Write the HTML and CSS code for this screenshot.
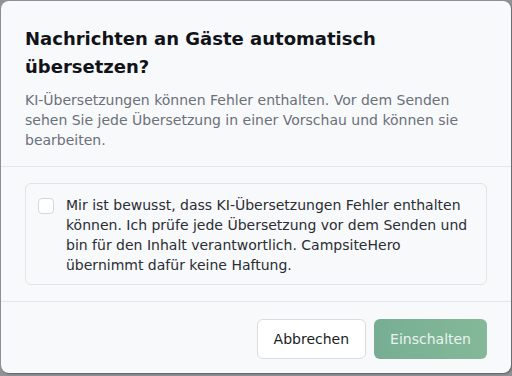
FILE: index.html
```html
<!DOCTYPE html>
<html lang="de">
<head>
<meta charset="utf-8">
<link rel="stylesheet" href="styles.css">
</head>
<body>
<div class="dialog">
  <div class="header">
    <h2 class="title">Nachrichten an Gäste automatisch übersetzen?</h2>
    <p class="desc">KI-Übersetzungen können Fehler enthalten. Vor dem Senden sehen Sie jede Übersetzung in einer Vorschau und können sie bearbeiten.</p>
  </div>
  <div class="body">
    <label class="consent">
      <span class="check"></span>
      <span class="consent-text">Mir ist bewusst, dass KI-Übersetzungen Fehler enthalten können. Ich prüfe jede Übersetzung vor dem Senden und bin für den Inhalt verantwortlich. CampsiteHero übernimmt dafür keine Haftung.</span>
    </label>
  </div>
  <div class="footer">
    <button class="btn btn-secondary">Abbrechen</button>
    <button class="btn btn-primary">Einschalten</button>
  </div>
</div>
</body>
</html>
```

FILE: styles.css
```css
* { box-sizing: border-box; }
html, body { margin: 0; padding: 0; }
body {
  width: 512px;
  height: 376px;
  background: #8f9296;
  font-family: "DejaVu Sans", sans-serif;
  overflow: hidden;
  padding: 1px 0 0 1px;
}
.dialog {
  width: 510px;
  height: 372px;
  background: #f8f9fb;
  border-radius: 8px;
  box-shadow: 1px 1px 2px rgba(0,0,0,0.35);
  display: flex;
  flex-direction: column;
}
.header {
  padding: 24px 24px 16px;
  border-bottom: 1px solid #e3e6ea;
}
.title {
  margin: 0;
  font-size: 18px;
  font-weight: bold;
  line-height: 28px;
  color: #111318;
}
.desc {
  margin: 9px 0 0;
  font-size: 14px;
  line-height: 20px;
  color: #6b7079;
}
.body {
  padding: 16px 24px 16px;
  border-bottom: 1px solid #e3e6ea;
}
.consent {
  display: flex;
  gap: 12px;
  align-items: flex-start;
  border: 1px solid #e1e4e8;
  border-radius: 6px;
  padding: 11px 12px 9px;
}
.check {
  flex: none;
  width: 16px;
  height: 16px;
  margin-top: 3px;
  border: 1px solid #d4d7dc;
  border-radius: 4px;
  background: #fff;
}
.consent-text {
  font-size: 14px;
  line-height: 20px;
  color: #2a2d33;
}
.footer {
  display: flex;
  justify-content: flex-end;
  gap: 8px;
  padding: 17px 24px 14px;
}
.btn {
  font-family: "DejaVu Sans", sans-serif;
  font-size: 14px;
  height: 40px;
  padding: 0 16px;
  border-radius: 6px;
  cursor: pointer;
}
.btn-secondary {
  background: #fff;
  border: 1px solid #d9dce1;
  color: #1b1e24;
}
.btn-primary {
  background: linear-gradient(90deg, #77ae93, #84b899);
  border: none;
  color: #eaf3ee;
}
```
